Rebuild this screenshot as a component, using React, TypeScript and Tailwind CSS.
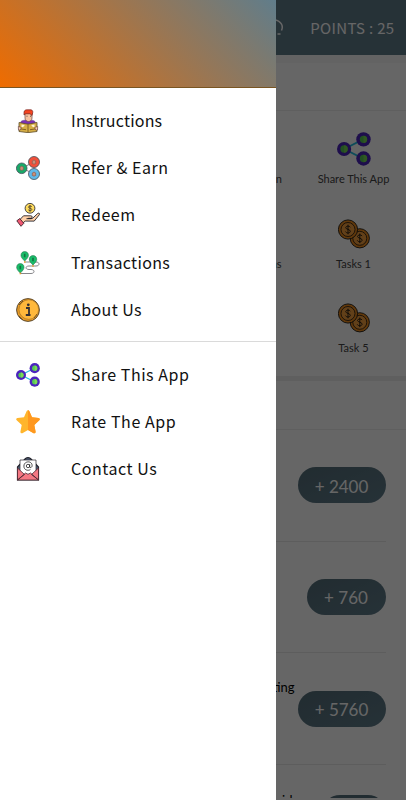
import type { ReactNode } from "react";

interface MenuItem {
  label: string;
  icon: ReactNode;
  tracking: string;
}

function ReaderIcon() {
  return (
    <svg viewBox="0 0 24 24" className="size-6">
      <path d="M4.500 14c0-2 2-3 7.500-3s7.500 1 7.500 3v2h-15z" fill="#7b2fb5" stroke="#54317a" strokeWidth=".5" />
      <path d="M9 4h7v5c0 2-1.500 3.500-3.500 3.500S9 11 9 9z" fill="#f7c2a0" stroke="#6b4540" strokeWidth=".7" />
      <path d="M8 6V3.500C8 1 10 .7 12 .8h3c1.500.3 2 1.500 1.700 3L16 6.500l-2-1.700H9.700z" fill="#f4431f" stroke="#742421" strokeWidth=".7" />
      <path d="M10.500 7.200h1m2.500 0h1" stroke="#333" strokeWidth=".8" />
      <path d="M3 13.500l8 1.500h2l8-1.500v9l-8 1H11l-8-1z" fill="#d6ae45" stroke="#5d4c2b" strokeWidth=".8" />
      <path d="M12 15v8M5 20l5 .7M19 20l-5 .7" stroke="#7b5a1d" strokeWidth=".9" />
      <path d="M5.500 15.500l3 .5q0 2-3 2.300zM18.500 15.500l-3 .5q0 2 3 2.300z" fill="#fff3d3" />
      <path d="M2.300 17.500l3 1-1 2.500H2.500zM21.700 17.500l-3 1 1 2.500h1.800z" fill="#ffd0b8" stroke="#5c3939" strokeWidth=".6" />
    </svg>
  );
}

function ReferIcon() {
  return (
    <svg viewBox="0 0 24 24" className="size-6">
      <path d="M6 12l12-6M6 12l12 6" stroke="#8c8080" strokeWidth="1" />
      {/* 3つの人物アイコン */}
      <g stroke="#44515a" strokeWidth=".8">
        <circle cx="5.700" cy="12.300" r="5.300" fill="#18a968" />
        <circle cx="18" cy="6" r="5.500" fill="#f1503a" />
        <circle cx="18" cy="18" r="5.500" fill="#61b8e9" />
      </g>
      <g fill="#cc8e76" stroke="#7d5651" strokeWidth=".6">
        <path d="M4 13.700v-2.500q1.700-2 3.400 0v2.500q-1.700 1.300-3.400 0zM16.300 7.500V5q1.700-2 3.400 0v2.500q-1.700 1.300-3.400 0zM16.300 19.500V17q1.700-2 3.400 0v2.500q-1.700 1.300-3.400 0z" />
      </g>
    </svg>
  );
}

function RedeemIcon() {
  return (
    <svg viewBox="0 0 24 24" className="size-6">
      <circle cx="14" cy="5.300" r="4.900" fill="#ffdc5c" stroke="#343338" strokeWidth=".9" />
      <path d="M15.800 3.700c-.5-1-3.300-1-3.300.4 0 1.600 3.300.7 3.300 2.400 0 1.500-2.900 1.400-3.500.3M14 2v6.800" stroke="#4d412c" strokeWidth=".9" fill="none" />
      <path d="M3.500 17l4-4.200h7.300c1.700 0 2 2.200.4 2.600h-3 4.300l5.300-5c1.500-.8 2.200.5 1.400 1.500l-5 6.200H9.200l-2.400 2z" fill="#ffd0a8" stroke="#252329" strokeWidth=".9" />
      <path d="M10.500 15.700h5" stroke="#242127" strokeWidth="1" />
      <path d="M.8 17.800l3-2.200 4 4.700-2.800 3z" fill="#f05872" stroke="#43242d" strokeWidth=".9" />
    </svg>
  );
}

function TransactionsIcon() {
  return (
    <svg viewBox="0 0 24 24" className="size-6">
      <path d="M9 11h11c4 0 4 4 0 4h-7c-4 0-4 3.500 0 3.500h2c4 0 4 4 0 4H4" fill="none" stroke="#78787d" strokeWidth=".9" />
      <g fill="#18bd69" stroke="#28764e" strokeWidth=".6">
        <path d="M8.700 10C6 7.500 5 6 5 4.300 5 2 6.500.6 8.700.6s3.700 1.400 3.700 3.700C12.400 6 11.500 7.500 8.700 10z" />
        <path d="M17 14c-2.700-2.500-3.700-4-3.700-5.700C13.300 6 14.800 4.600 17 4.600s3.700 1.400 3.700 3.700c0 1.700-1 3.200-3.700 5.700z" />
        <path d="M4.300 22C1.600 19.500.7 18 .7 16.300c0-2.300 1.400-3.700 3.600-3.700S8 14 8 16.300c0 1.700-1 3.200-3.700 5.700z" />
      </g>
      <path d="M8.700 2.700v3.600M17 6.700v3.600M4.300 14.700v3.600" stroke="#147142" strokeWidth="1.600" />
      <path d="M8 10.300h1.500v1.500H8zM16.200 14.200h1.500v1.500h-1.500zM3.600 21.800h1.500v1.500H3.600z" fill="#e99820" />
    </svg>
  );
}

function AboutIcon() {
  return (
    <svg viewBox="0 0 24 24" className="size-6">
      <circle cx="12" cy="12" r="11.400" fill="#e89b25" stroke="#493c29" strokeWidth=".9" />
      <circle cx="12.800" cy="11.500" r="9.800" fill="#ffb83b" stroke="#8a6124" strokeWidth=".5" />
      <path d="M3 7l4-4M3 18l4 4M18 20l3-4" stroke="#614820" strokeWidth=".8" />
      <circle cx="12.300" cy="6.800" r="1.400" fill="#343033" />
      <path d="M10 10h3v7h1.500M9.800 17h4.700" fill="none" stroke="#343033" strokeWidth="1.800" />
    </svg>
  );
}

function ShareIcon({ className = "size-6" }: { className?: string }) {
  return (
    <svg viewBox="0 0 24 24" className={className}>
      <path d="M5 12l13.500-6.800M5 12l13.500 6.800" stroke="#22bfe2" strokeWidth="1.200" />
      <g fill="#4b24bd">
        <circle cx="5" cy="12" r="5" />
        <circle cx="18.700" cy="5.200" r="5.100" />
        <circle cx="18.700" cy="18.700" r="5.100" />
      </g>
      <g fill="#55c955">
        <circle cx="5" cy="12" r="2.600" />
        <circle cx="18.700" cy="5.200" r="2.600" />
        <circle cx="18.700" cy="18.700" r="2.600" />
      </g>
      <path d="M5 9.400a2.600 2.600 0 010 5.200zM18.700 2.600a2.600 2.600 0 010 5.200zM18.700 16.100a2.600 2.600 0 010 5.200z" fill="#7cd957" />
    </svg>
  );
}

function RateIcon() {
  return (
    <svg viewBox="0 0 24 24" className="size-6">
      <path d="M12 .3q1 0 1.400 1l2.600 6 6.600.8q2 .6.700 2.200l-5 4.700 1.300 6.800q0 2-2 1.400L12 20l-5.600 3.200q-2 .6-2-1.400L5.700 15l-5-4.700Q-.6 8.700 1.400 8.100L8 7.300l2.600-6q.4-1 1.400-1z" fill="#ffb52c" />
      <path d="M12 .3q1 0 1.400 1l2.600 6 6.600.8q2 .6.700 2.200l-5 4.700 1.300 6.800q0 2-2 1.400L12 20z" fill="#ff981f" />
    </svg>
  );
}

function ContactIcon() {
  return (
    <svg viewBox="0 0 24 24" className="size-6">
      <path d="M1.500 10l8-8.500q2.500-1.700 5 0l8 8.500v13h-21z" fill="#53637d" stroke="#23242d" strokeWidth="1.200" />
      <path d="M4 3h16v15H4z" fill="#fff" stroke="#29262d" strokeWidth=".7" />
      <path d="M1.500 11l7 6.500-7 5.500zM22.500 11l-7 6.500 7 5.500zM1.500 23l8-7q2.500 2.500 5 0l8 7z" fill="#f47883" stroke="#502832" strokeWidth=".8" />
      <circle cx="12" cy="9" r="1.700" fill="none" stroke="#222" strokeWidth=".8" />
      <path d="M13.700 7.200v2.700c0 1.200 2.400.9 2.400-1.300 0-5.300-8.200-4.800-8.200.5 0 4 4 5 6.500 3.500" fill="none" stroke="#222" strokeWidth=".8" />
    </svg>
  );
}

function CoinsIcon() {
  return (
    <svg viewBox="0 0 32 30" className="h-[30px] w-8">
      {[
        { x: 21.8, y: 19.3 },
        { x: 10, y: 10.5 },
      ].map((c) => (
        <g key={c.x} transform={`translate(${c.x} ${c.y})`} fill="none" stroke="#1b1712">
          <circle r="9.600" fill="#f08c1c" strokeWidth=".9" />
          <circle r="7" fill="#f5a040" strokeWidth=".8" />
          <path d="M2.300-2.300C1.500-4-2.300-3.600-2.300-1.800S2.300-.4 2.300 1.800-1.700 4-2.500 2.100M0-4.800v9.600" strokeWidth=".9" />
        </g>
      ))}
    </svg>
  );
}

const mainItems: MenuItem[] = [
  { label: "Instructions", icon: <ReaderIcon />, tracking: "tracking-[0.200px]" },
  { label: "Refer & Earn", icon: <ReferIcon />, tracking: "tracking-[0.500px]" },
  { label: "Redeem", icon: <RedeemIcon />, tracking: "tracking-[0.550px]" },
  { label: "Transactions", icon: <TransactionsIcon />, tracking: "tracking-[0.330px]" },
  { label: "About Us", icon: <AboutIcon />, tracking: "tracking-[0.420px]" },
];

const otherItems: MenuItem[] = [
  { label: "Share This App", icon: <ShareIcon />, tracking: "tracking-[0.520px]" },
  { label: "Rate The App", icon: <RateIcon />, tracking: "tracking-[0.570px]" },
  { label: "Contact Us", icon: <ContactIcon />, tracking: "tracking-[0.550px]" },
];

const shortcuts = [
  { left: "Refer & Earn", label: "Share This App", icon: <ShareIcon className="size-[34px]" /> },
  { left: "Transactions", label: "Tasks 1", icon: <CoinsIcon /> },
  { left: "", label: "Task 5", icon: <CoinsIcon /> },
];

const offers = [
  { title: "", points: "+ 2400", width: "w-[88px]" },
  { title: "", points: "+ 760", width: "w-[79px]" },
  { title: "Testing", points: "+ 5760", width: "w-[88px]" },
];

function MenuList({ items }: { items: MenuItem[] }) {
  return (
    <ul>
      {items.map((item) => (
        <li key={item.label} className="flex h-[47.400px] items-center pl-[15.500px]">
          {item.icon}
          <span className={`ml-[31.500px] pb-0.5 font-['Noto_Sans_CJK_JP',sans-serif] text-[16px] whitespace-nowrap text-[#111] ${item.tracking}`}>
            {item.label}
          </span>
        </li>
      ))}
    </ul>
  );
}

function HomePage() {
  return (
    <div className="flex h-full flex-col overflow-hidden bg-white font-[Lato,sans-serif]">
      <header className="flex h-[55px] shrink-0 items-center justify-end bg-[#607d8b] pr-[11.500px] text-white shadow-sm">
        <svg viewBox="0 0 20 20" className="mr-[26px] size-5" fill="none" stroke="currentColor" strokeWidth="1.500">
          <path d="M2.500 10a8 8 0 0112-6.800q5.500 3.500 3 9.300M13.500 16h3" />
        </svg>
        <span className="pt-px font-['Noto_Sans_CJK_JP',sans-serif] text-[15px] tracking-[0.320px]">POINTS : 25</span>
      </header>
      <div className="h-2 shrink-0 bg-[#f7f7f7]" />
      <div className="h-12 shrink-0 border-b border-[#eee]" />

      <section className="h-[265px] shrink-0 pt-[18px]">
        {shortcuts.map((s) => (
          <div key={s.label} className="grid h-[84.500px] grid-cols-[102px_102px] justify-end pr-[1.500px] text-center text-[11px] leading-4 text-[#444]">
            <span className="pt-[42px]">{s.left}</span>
            <div className="flex flex-col items-center gap-0.5">
              <div className="flex h-10 items-center">{s.icon}</div>
              <span>{s.label}</span>
            </div>
          </div>
        ))}
      </section>

      <div className="h-[5px] shrink-0 bg-[#eee]" />
      <div className="h-[49px] shrink-0 border-b border-[#eee]" />
      <section className="mr-[20.500px] shrink-0">
        {offers.map((o) => (
          <div key={o.points} className="flex h-[111.700px] items-center justify-end gap-[3px] border-b border-[#e8e8e8]">
            <span className="mb-[42px] text-[13px] text-black">{o.title}</span>
            <span className={`flex h-9 items-center justify-center rounded-full bg-linear-to-br from-[#546e7a] to-[#607d8b] pt-0.5 text-[17px] text-white ${o.width}`}>
              {o.points}
            </span>
          </div>
        ))}
        <div className="flex h-[33px] items-end justify-end overflow-hidden">
          <div className="flex h-[5px] items-start overflow-hidden">
            <span className="mr-[29px] text-[13px] leading-[14px] text-black">Android</span>
            <span className="mt-0.5 h-9 w-16 rounded-full bg-[#546e7a]" />
          </div>
        </div>
      </section>
    </div>
  );
}

export default function App() {
  return (
    <div className="relative h-[800px] w-[406px] overflow-hidden">
      <HomePage />
      <div className="absolute inset-0 bg-black/60" />
      <aside className="absolute inset-y-0 left-0 w-[276px] bg-white">
        <div className="h-[88px] border-b border-[#795522] bg-linear-[45deg,#ef6c00,#607d8b]" />
        <nav className="pt-[9px]">
          <MenuList items={mainItems} />
          <div className="mt-[7px] mb-[9px] h-px bg-[#dadada]" />
          <MenuList items={otherItems} />
        </nav>
      </aside>
    </div>
  );
}
